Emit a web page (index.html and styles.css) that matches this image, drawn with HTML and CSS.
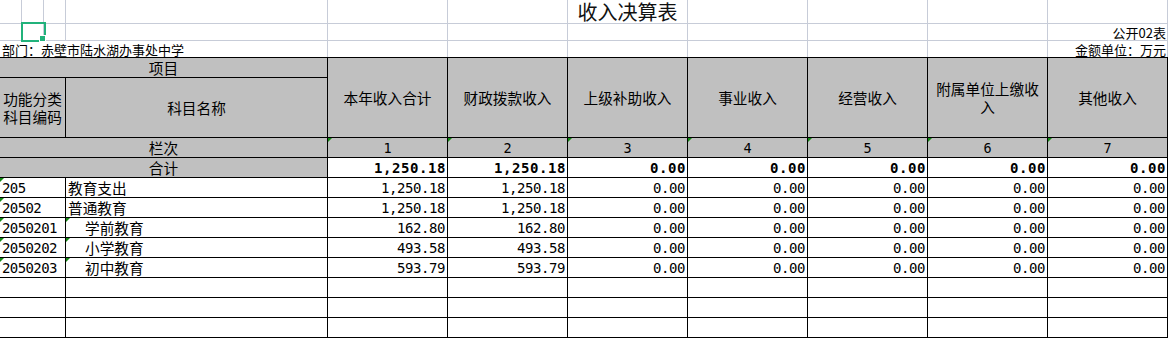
FILE: index.html
```html
<!DOCTYPE html>
<html lang="zh-CN">
<head>
<meta charset="utf-8">
<title>收入决算表</title>
<link rel="stylesheet" href="styles.css">
</head>
<body>
<div class="top">
  <div class="g"></div><div class="g"></div><div class="g"></div><div class="g"></div>
  <div class="g"></div><div class="g"></div><div class="g title"><span class="title-text">收入决算表</span></div>
  <div class="g"></div><div class="g"></div><div class="g"></div><div class="g"></div>

  <div class="g"></div><div class="g sel-cell"><div class="sel"><span class="handle"></span></div></div><div class="g"></div><div class="g"></div>
  <div class="g"></div><div class="g"></div><div class="g"></div>
  <div class="g"></div><div class="g"></div><div class="g"></div><div class="g note">公开02表</div>

  <div class="g nb dept">部门：赤壁市陆水湖办事处中学</div>
  <div class="g nb"></div><div class="g nb"></div><div class="g nb"></div>
  <div class="g nb"></div><div class="g nb"></div><div class="g nb"></div>
  <div class="g nb note">金额单位：万元</div>
</div>

<div class="sheet">
  <div class="c h span2">项目</div>
  <div class="c h tall">本年收入合计</div>
  <div class="c h tall">财政拨款收入</div>
  <div class="c h tall">上级补助收入</div>
  <div class="c h tall">事业收入</div>
  <div class="c h tall">经营收入</div>
  <div class="c h tall">附属单位上缴收入</div>
  <div class="c h tall">其他收入</div>
  <div class="c h narrow">功能分类科目编码</div>
  <div class="c h">科目名称</div>

  <div class="c h span2">栏次</div>
  <div class="c h num-h tri">1</div>
  <div class="c h num-h tri">2</div>
  <div class="c h num-h tri">3</div>
  <div class="c h num-h tri">4</div>
  <div class="c h num-h tri">5</div>
  <div class="c h num-h tri">6</div>
  <div class="c h num-h tri">7</div>

  <div class="c h span2">合计</div>
  <div class="c n b">1,250.18</div>
  <div class="c n b">1,250.18</div>
  <div class="c n b">0.00</div>
  <div class="c n b">0.00</div>
  <div class="c n b">0.00</div>
  <div class="c n b">0.00</div>
  <div class="c n b">0.00</div>

  <div class="c code tri">205</div>
  <div class="c name">教育支出</div>
  <div class="c n">1,250.18</div>
  <div class="c n">1,250.18</div>
  <div class="c n">0.00</div>
  <div class="c n">0.00</div>
  <div class="c n">0.00</div>
  <div class="c n">0.00</div>
  <div class="c n">0.00</div>

  <div class="c code tri">20502</div>
  <div class="c name">普通教育</div>
  <div class="c n">1,250.18</div>
  <div class="c n">1,250.18</div>
  <div class="c n">0.00</div>
  <div class="c n">0.00</div>
  <div class="c n">0.00</div>
  <div class="c n">0.00</div>
  <div class="c n">0.00</div>

  <div class="c code tri">2050201</div>
  <div class="c name sub tri">学前教育</div>
  <div class="c n">162.80</div>
  <div class="c n">162.80</div>
  <div class="c n">0.00</div>
  <div class="c n">0.00</div>
  <div class="c n">0.00</div>
  <div class="c n">0.00</div>
  <div class="c n">0.00</div>

  <div class="c code tri">2050202</div>
  <div class="c name sub tri">小学教育</div>
  <div class="c n">493.58</div>
  <div class="c n">493.58</div>
  <div class="c n">0.00</div>
  <div class="c n">0.00</div>
  <div class="c n">0.00</div>
  <div class="c n">0.00</div>
  <div class="c n">0.00</div>

  <div class="c code tri">2050203</div>
  <div class="c name sub tri">初中教育</div>
  <div class="c n">593.79</div>
  <div class="c n">593.79</div>
  <div class="c n">0.00</div>
  <div class="c n">0.00</div>
  <div class="c n">0.00</div>
  <div class="c n">0.00</div>
  <div class="c n">0.00</div>

  <div class="c"></div><div class="c"></div><div class="c"></div><div class="c"></div><div class="c"></div><div class="c"></div><div class="c"></div><div class="c"></div><div class="c"></div>
  <div class="c"></div><div class="c"></div><div class="c"></div><div class="c"></div><div class="c"></div><div class="c"></div><div class="c"></div><div class="c"></div><div class="c"></div>
  <div class="c"></div><div class="c"></div><div class="c"></div><div class="c"></div><div class="c"></div><div class="c"></div><div class="c"></div><div class="c"></div><div class="c"></div>
</div>
</body>
</html>
```

FILE: styles.css
```css
* {
  box-sizing: border-box;
}

html, body {
  margin: 0;
  padding: 0;
  background: #ffffff;
}

body {
  font-family: "Noto Sans CJK SC", "Noto Sans", sans-serif;
  color: #000;
  width: 1169px;
}

/* ---------- sheet area above the table ---------- */
.top {
  display: grid;
  grid-template-columns: 22px 22px 22px 262px repeat(7, 120px);
  grid-template-rows: 24px 17px 16px;
}

.g {
  border-right: 1px solid #c7ccd8;
  border-bottom: 1px solid #c7ccd8;
  min-width: 0;
}

.g.nb {
  border-bottom: none;
}

.title {
  display: flex;
  align-items: center;
  justify-content: center;
}

.title-text {
  font-size: 20px;
  line-height: 1;
  white-space: nowrap;
  color: #111;
}

.note {
  font-size: 13px;
  line-height: 15px;
  display: flex;
  align-items: flex-end;
  justify-content: flex-end;
  padding-right: 1px;
  white-space: nowrap;
}

.dept {
  grid-column: 1 / 5;
  font-size: 13px;
  line-height: 15px;
  display: flex;
  align-items: flex-end;
  padding-left: 2px;
  white-space: nowrap;
}

.sel-cell {
  position: relative;
}

.sel {
  position: absolute;
  left: -1px;
  top: -2px;
  width: 25px;
  height: 20px;
  border: 2px solid #21b27b;
}

.handle {
  position: absolute;
  left: 16px;
  top: 11px;
  width: 7px;
  height: 7px;
  background: #21b27b;
  border: 1px solid #ffffff;
}

/* ---------- main table ---------- */
.sheet {
  display: grid;
  grid-template-columns: 66px 262px repeat(7, 120px);
  grid-template-rows: 20px 60px repeat(10, 20px);
  border-top: 1px solid #000;
  width: 1168px;
}

.c {
  position: relative;
  border-right: 1px solid #000;
  border-bottom: 1px solid #000;
  min-width: 0;
  font-size: 14.67px;
  line-height: 18px;
  display: flex;
  align-items: center;
  white-space: nowrap;
  overflow: hidden;
}

.h {
  background: #c0c0c0;
  justify-content: center;
  text-align: center;
  padding: 0 7px;
  white-space: normal;
}

.span2 {
  grid-column: span 2;
}

.tall {
  grid-row: span 2;
}

.narrow {
  padding: 1px 0 0;
}

.num-h {
  font-family: "DejaVu Sans Mono", monospace;
  font-size: 13.5px;
  letter-spacing: -0.1px;
}

.n {
  justify-content: flex-end;
  padding-right: 2px;
  font-family: "DejaVu Sans Mono", monospace;
  font-size: 14px;
  letter-spacing: -0.43px;
}

.n.b {
  font-weight: bold;
  letter-spacing: 0.57px;
  padding-right: 1px;
}

.code {
  padding-left: 2px;
  font-family: "DejaVu Sans Mono", monospace;
  font-size: 14px;
  letter-spacing: -0.6px;
}

.name {
  padding-left: 2px;
}

.name.sub {
  padding-left: 19px;
}

.tri::before {
  content: "";
  position: absolute;
  left: 0;
  top: 0;
  width: 0;
  height: 0;
  border-top: 4px solid #138a13;
  border-right: 4px solid transparent;
}
```
